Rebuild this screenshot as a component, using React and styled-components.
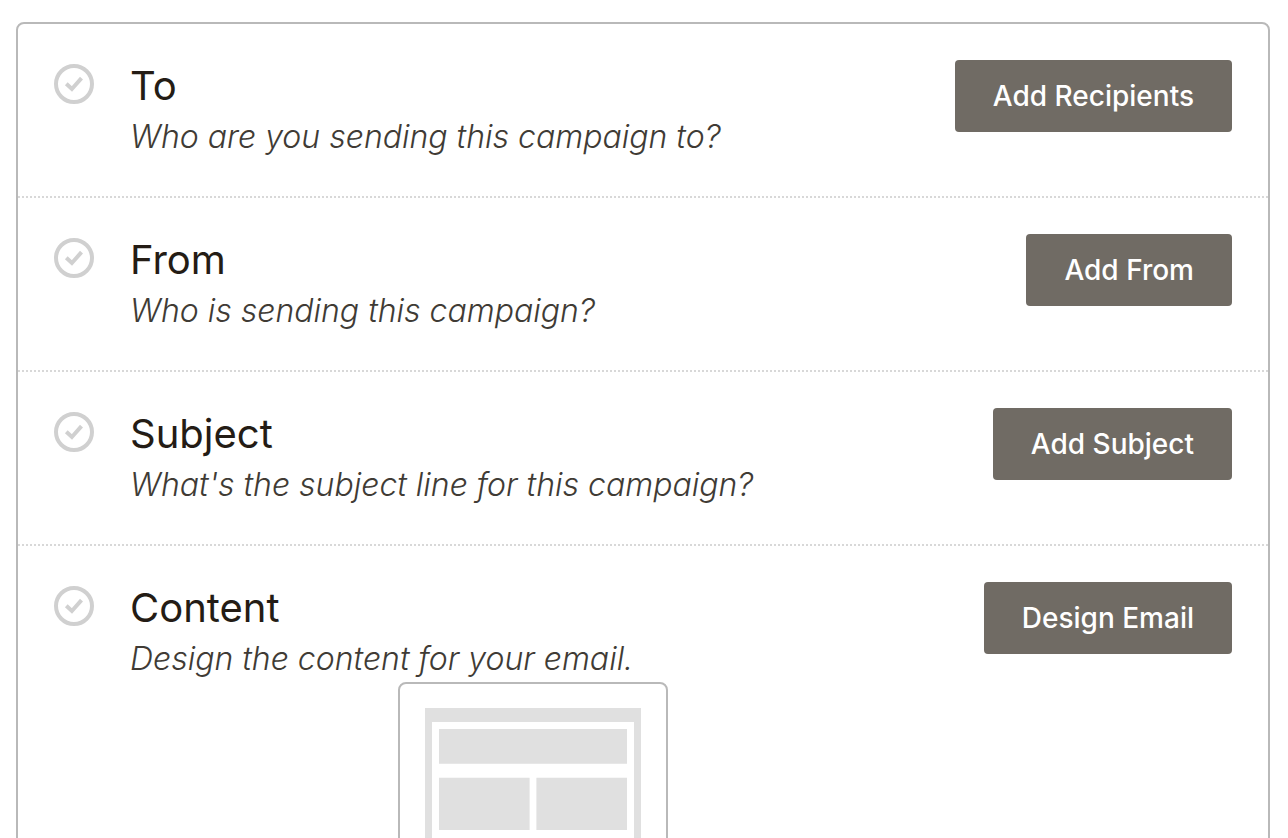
import React from 'react';
import styled, { createGlobalStyle } from 'styled-components';

const GlobalStyle = createGlobalStyle`
  * {
    box-sizing: border-box;
  }

  html,
  body {
    margin: 0;
    height: 100%;
    background: #fff;
    overflow: hidden;
  }

  body {
    font-family: Inter, 'Liberation Sans', sans-serif;
    color: #241c15;
  }
`;

const Page = styled.main`
  padding: 22px 18px 0 16px;
`;

const Checklist = styled.section`
  border: 2px solid #b9b9b9;
  border-radius: 8px;
`;

const Row = styled.article`
  display: flex;
  align-items: flex-start;
  padding: 36px;
  min-height: 174px;

  &:not(:last-of-type) {
    border-bottom: 2px dotted #d8d8d8;
  }
`;

const Status = styled.svg`
  flex: none;
  width: 40px;
  height: 40px;
  margin: 4px 36px 0 0;
  fill: none;
  stroke: #d0d0d0;
  stroke-width: 4;
`;

const Details = styled.div`
  flex: 1;
  display: flex;
  flex-direction: column;
  margin-right: 48px;
`;

const Title = styled.h2`
  margin: 0 0 2px;
  font-size: 40px;
  font-weight: 400;
  line-height: 52px;
`;

const Hint = styled.p`
  margin: 0;
  font-size: 32px;
  font-style: italic;
  font-weight: 300;
  line-height: 46px;
  color: #403b35;
`;

const Button = styled.button`
  flex: none;
  height: 72px;
  padding: 0 38px;
  border: 0;
  border-radius: 4px;
  background: #706b64;
  color: #fff;
  font-family: inherit;
  font-size: 28px;
  font-weight: 500;
  cursor: pointer;
`;

const Preview = styled.div`
  align-self: center;
  width: 270px;
  padding: 24px 25px;
  border: 2px solid #b9b9b9;
  border-radius: 8px;
`;

const Template = styled.svg`
  display: block;
  width: 216px;
  height: 280px;
  fill: #e0e0e0;
`;

const steps = [
  { title: 'To', hint: 'Who are you sending this campaign to?', action: 'Add Recipients' },
  { title: 'From', hint: 'Who is sending this campaign?', action: 'Add From' },
  { title: 'Subject', hint: "What's the subject line for this campaign?", action: 'Add Subject' },
  { title: 'Content', hint: 'Design the content for your email.', action: 'Design Email', preview: true },
];

const CheckIcon = () => (
  <Status viewBox="0 0 40 40" aria-hidden="true">
    <circle cx="20" cy="20" r="18" />
    <path d="M12.3 19.8l5.6 5.2L27.5 14.2" />
  </Status>
);

const TemplatePreview = () => (
  <Preview>
    <Template viewBox="0 0 216 280" role="img" aria-label="Email template">
      <path fillRule="evenodd" d="M0 0h216v280H0zM7 14v259h202V14z" />
      <path d="M14 21h188v34.7H14zM14 69.7h90.6V122H14zM111.4 69.7H202V122h-90.6zM14 136h188v123H14z" />
    </Template>
  </Preview>
);

const App = () => (
  <>
    <GlobalStyle />
    <Page>
      <Checklist>
        {steps.map(({ title, hint, action, preview }) => (
          <Row key={title}>
            <CheckIcon />
            <Details>
              <Title>{title}</Title>
              <Hint>{hint}</Hint>
              {preview && <TemplatePreview />}
            </Details>
            <Button type="button">{action}</Button>
          </Row>
        ))}
      </Checklist>
    </Page>
  </>
);

export default App;
